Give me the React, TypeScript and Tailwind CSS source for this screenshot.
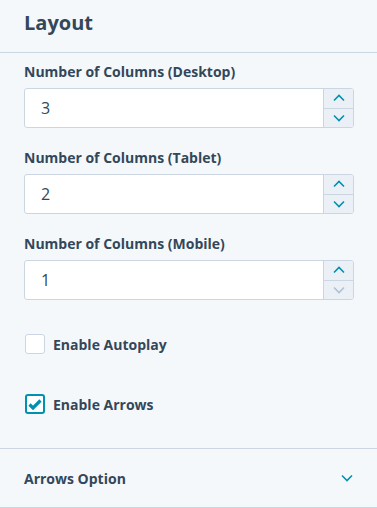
import { useState } from "react";

function Chevron({ dir, className }: { dir: "up" | "down"; className: string }) {
  return (
    <svg width="12" height="8" viewBox="0 0 12 8" className={className}>
      <path
        d={dir === "up" ? "M1 6.5 L6 1.5 L11 6.5" : "M1 1.5 L6 6.5 L11 1.5"}
        fill="none"
        stroke="currentColor"
        strokeWidth="1.6"
      />
    </svg>
  );
}

function NumberField({ label, value, min }: { label: string; value: number; min: number }) {
  const [v, setV] = useState(value);
  const atMin = v <= min;
  return (
    <div className="flex flex-col gap-[6px]">
      <label className="text-[14px] leading-[20px] font-bold text-[#33475b]">{label}</label>
      <div className="flex h-[40px] rounded-[3px] border border-[#cbd6e2] bg-white overflow-hidden">
        <div className="flex-1 flex items-center pl-[16px] text-[16px] text-[#33475b]">{v}</div>
        <div className="w-[30px] flex flex-col border-l border-[#cbd6e2] bg-[#eaf0f6]">
          <button
            onClick={() => setV(v + 1)}
            className="flex-1 flex items-center justify-center border-b border-[#cbd6e2]"
          >
            <Chevron dir="up" className="text-[#0091ae]" />
          </button>
          <button onClick={() => setV(Math.max(min, v - 1))} className="flex-1 flex items-center justify-center">
            <Chevron dir="down" className={atMin ? "text-[#b0c1d4]" : "text-[#0091ae]"} />
          </button>
        </div>
      </div>
    </div>
  );
}

function Check({ label, checked }: { label: string; checked: boolean }) {
  const [on, setOn] = useState(checked);
  return (
    <button onClick={() => setOn(!on)} className="flex items-center gap-[8px] h-[20px]">
      <span
        className={
          on
            ? "w-[20px] h-[20px] rounded-[3px] border-2 border-[#0091ae] bg-white flex items-center justify-center"
            : "w-[20px] h-[20px] rounded-[3px] border border-[#cbd6e2] bg-white"
        }
      >
        {on && (
          <svg width="14" height="11" viewBox="0 0 14 11">
            <path d="M1.5 5.5 L5 9 L12.5 1.5" fill="none" stroke="#0091ae" strokeWidth="3.2" />
          </svg>
        )}
      </span>
      <span className="text-[14px] font-bold text-[#33475b]">{label}</span>
    </button>
  );
}

const App = () => {
  return (
    <div className="w-[377px] h-[508px] bg-[#f5f8fa] overflow-hidden font-['Open_Sans',sans-serif]">
      {/* 헤더 */}
      <div className="h-[53px] border-b border-[#cbd6e2] pl-[24px] flex items-center pb-[6px]">
        <h2 className="text-[20px] font-bold text-[#33475b]">Layout</h2>
      </div>
      <div className="px-[24px] pt-[9px] flex flex-col gap-[20px] pr-[23px]">
        <NumberField label="Number of Columns (Desktop)" value={3} min={1} />
        <NumberField label="Number of Columns (Tablet)" value={2} min={1} />
        <NumberField label="Number of Columns (Mobile)" value={1} min={1} />
      </div>
      <div className="px-[25px] pt-[34px] flex flex-col gap-[40px] items-start">
        <Check label="Enable Autoplay" checked={false} />
        <Check label="Enable Arrows" checked={true} />
      </div>
      <div className="mt-[34px] border-t border-b border-[#cbd6e2] h-[60px] flex items-center justify-between pl-[24px] pr-[24px]">
        <span className="text-[14px] font-bold text-[#33475b]">Arrows Option</span>
        <Chevron dir="down" className="text-[#0091ae]" />
      </div>
    </div>
  );
};

export default App;
